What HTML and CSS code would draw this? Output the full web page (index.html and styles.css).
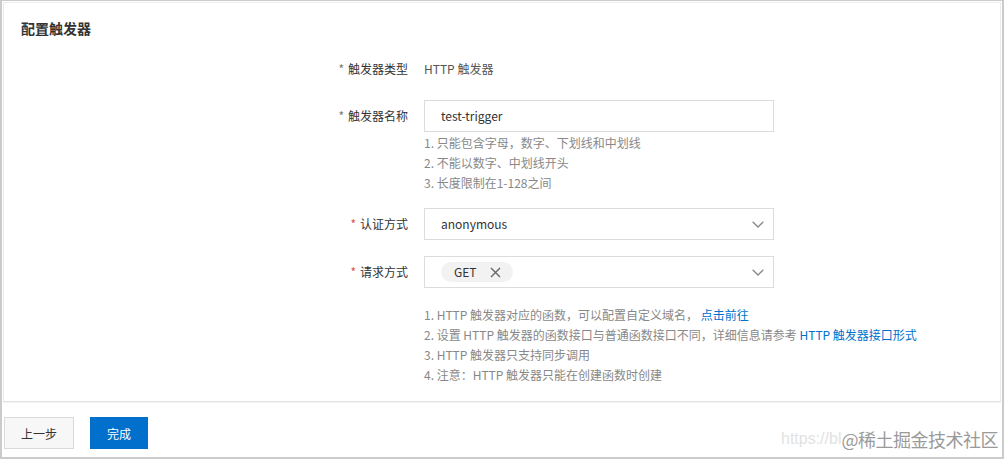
FILE: index.html
```html
<!DOCTYPE html>
<html lang="zh-CN">
<head>
<meta charset="utf-8">
<title>配置触发器</title>
<link rel="stylesheet" href="styles.css">
</head>
<body>
<div class="frame">
  <div class="card">
    <div class="card-title">配置触发器</div>
    <div class="form">
      <div class="item">
        <div class="label"><span class="star gray">*</span>触发器类型</div>
        <div class="control"><span class="value">HTTP 触发器</span></div>
      </div>
      <div class="item">
        <div class="label"><span class="star gray">*</span>触发器名称</div>
        <div class="control">
          <div class="input">test-trigger</div>
          <div class="help tight">
            <div>1. 只能包含字母，数字、下划线和中划线</div>
            <div>2. 不能以数字、中划线开头</div>
            <div>3. 长度限制在1-128之间</div>
          </div>
        </div>
      </div>
      <div class="item">
        <div class="label"><span class="star">*</span>认证方式</div>
        <div class="control">
          <div class="input select">
            <span>anonymous</span>
            <svg class="chev" width="12" height="7" viewBox="0 0 12 7"><path d="M0.7 0.7 L6 6 L11.3 0.7" fill="none" stroke="#888" stroke-width="1.3"/></svg>
          </div>
        </div>
      </div>
      <div class="item last">
        <div class="label"><span class="star">*</span>请求方式</div>
        <div class="control">
          <div class="input select">
            <span class="tag">GET<svg class="x" width="11" height="11" viewBox="0 0 11 11"><path d="M1 1 L10 10 M10 1 L1 10" stroke="#666" stroke-width="1.4"/></svg></span>
            <svg class="chev" width="12" height="7" viewBox="0 0 12 7"><path d="M0.7 0.7 L6 6 L11.3 0.7" fill="none" stroke="#888" stroke-width="1.3"/></svg>
          </div>
        </div>
      </div>
      <div class="item">
        <div class="label"></div>
        <div class="control">
          <div class="help">
            <div>1. HTTP 触发器对应的函数，可以配置自定义域名， <a class="link">点击前往</a></div>
            <div>2. 设置 HTTP 触发器的函数接口与普通函数接口不同，详细信息请参考 <a class="link">HTTP 触发器接口形式</a></div>
            <div>3. HTTP 触发器只支持同步调用</div>
            <div>4. 注意：HTTP 触发器只能在创建函数时创建</div>
          </div>
        </div>
      </div>
    </div>
  </div>
  <div class="footer">
    <button class="btn">上一步</button>
    <button class="btn primary">完成</button>
  </div>
  <div class="watermark"><span class="wm-url">https://bl</span><span class="wm-name">@稀土掘金技术社区</span></div>
</div>
</body>
</html>
```

FILE: styles.css
```css
* { box-sizing: border-box; }
html, body { margin: 0; padding: 0; background: #fff; }
body {
  font-family: "Noto Sans CJK SC", "Noto Sans", sans-serif;
  font-size: 12px;
  color: #333;
}
.frame {
  position: relative;
  width: 1004px;
  height: 459px;
  border: 2px solid #cbcbcb;
  border-top-width: 1px;
  overflow: hidden;
}
.card {
  margin: 1px 1px 0 1px;
  border: 1px solid #ececec;
  border-bottom-color: #e2e2e2;
  box-shadow: 0 1px 1px rgba(0,0,0,0.04);
  padding: 15px 0 16px 0;
}
.card-title {
  padding-left: 17px;
  font-size: 14px;
  line-height: 20px;
  font-weight: bold;
  color: #333;
  margin-bottom: 15px;
}
.form { display: flex; flex-direction: column; gap: 15px; }
.item { display: flex; align-items: flex-start; }
.item.last { margin-top: 1px; }
.item:last-child { margin-top: 2px; }
.label {
  width: 420px;
  padding-right: 16px;
  text-align: right;
  line-height: 32px;
  color: #333;
  white-space: nowrap;
}
.star { color: #d9534f; margin-right: 4px; }
.star.gray { color: #777; }
.control { width: 350px; }
.value { line-height: 32px; color: #555; }
.input {
  height: 32px;
  border: 1px solid #dcdcdc;
  padding: 0 16px;
  line-height: 30px;
  color: #333;
  background: #fff;
}
.select { display: flex; align-items: center; justify-content: space-between; padding-right: 9px; }
.chev { display: block; }
.tag {
  display: inline-flex;
  align-items: center;
  height: 20px;
  line-height: 20px;
  padding: 0 12px 0 13px;
  border-radius: 10px;
  background: #f2f2f2;
  color: #333;
}
.tag .x { margin-left: 13px; display: block; }
.help { color: #888; line-height: 20px; white-space: nowrap; }
.help.tight { margin-top: 1px; }
.link { color: #0070cc; text-decoration: none; }
.footer {
  display: flex;
  gap: 16px;
  padding: 15px 0 0 2px;
}
.btn {
  height: 32px;
  padding: 0;
  font-family: inherit;
  font-size: 12px;
  border: 1px solid #dadada;
  background: #f7f7f7;
  color: #333;
  width: 70px;
}
.btn.primary {
  width: 58px;
  background: #0070cc;
  border-color: #0070cc;
  color: #fff;
}
.watermark {
  position: absolute;
  right: 4px;
  bottom: 5px;
  display: flex;
  align-items: center;
  font-family: "DejaVu Serif", "Noto Sans CJK SC", serif;
  pointer-events: none;
}
.wm-url { font-family: "Liberation Sans", sans-serif; font-size: 16px; color: #e2e2e2; }
.wm-name { font-family: "Noto Sans CJK SC", serif; font-size: 18px; color: #9a9a9a; letter-spacing: -0.5px; }
```
